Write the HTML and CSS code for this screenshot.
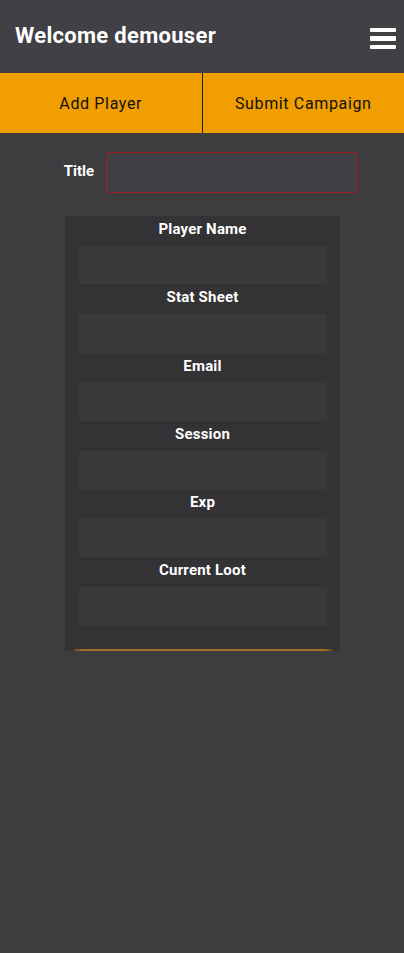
FILE: index.html
```html
<!DOCTYPE html>
<html>
<head>
<meta charset="utf-8">
<link rel="stylesheet" href="styles.css">
</head>
<body>
<header class="topbar">
  <h1 class="welcome">Welcome demouser</h1>
  <button class="burger" aria-label="menu"><span></span><span></span><span></span></button>
</header>
<nav class="actions">
  <button class="action">Add Player</button>
  <button class="action">Submit Campaign</button>
</nav>
<main class="content">
  <div class="title-row">
    <label class="title-label">Title</label>
    <input class="title-input" type="text">
  </div>
  <section class="card">
    <label class="field-label">Player Name</label>
    <input class="field-input" type="text">
    <label class="field-label">Stat Sheet</label>
    <input class="field-input" type="text">
    <label class="field-label">Email</label>
    <input class="field-input" type="text">
    <label class="field-label">Session</label>
    <input class="field-input" type="text">
    <label class="field-label">Exp</label>
    <input class="field-input" type="text">
    <label class="field-label">Current Loot</label>
    <input class="field-input" type="text">
    <div class="card-edge"></div>
  </section>
</main>
</body>
</html>
```
FILE: styles.css
```css
html, body {
  margin: 0;
  padding: 0;
  background: #3d3c3f;
  font-family: Roboto, "Noto Sans", sans-serif;
  color: #fff;
  min-height: 953px;
}
.topbar {
  height: 73px;
  background: #414045;
  display: flex;
  align-items: center;
  justify-content: space-between;
  padding: 0 8px 0 15px;
  box-sizing: border-box;
}
.welcome {
  margin: 0;
  font-size: 22px;
  font-weight: 700;
  letter-spacing: 0.3px;
  position: relative;
  top: -1px;
}
.burger {
  background: none;
  border: 0;
  padding: 0;
  width: 26px;
  display: flex;
  flex-direction: column;
  gap: 4.3px;
  margin-top: 4px;
}
.burger span {
  display: block;
  height: 4.3px;
  background: #fff;
  border-radius: 1px;
}
.actions {
  display: flex;
  height: 60px;
  background: #f09e00;
}
.action {
  flex: 1;
  background: #f09e00;
  border: 0;
  font-family: Roboto, "Noto Sans", sans-serif;
  font-size: 16px;
  letter-spacing: 0.65px;
  color: #111;
  padding: 0;
}
.action + .action {
  border-left: 1px solid #1a1a1a;
}
.content {
  display: flex;
  flex-direction: column;
  align-items: center;
  padding-top: 19px;
}
.title-row {
  display: flex;
  align-items: center;
  gap: 12px;
  margin-left: 17px;
}
.title-label {
  font-size: 15px;
  font-weight: 700;
  position: relative;
  top: -2px;
}
.title-input {
  width: 251px;
  height: 41px;
  box-sizing: border-box;
  background: #413f43;
  border: 1px solid #a01e1e;
  border-radius: 2px;
  outline: none;
}
.card {
  margin-top: 23px;
  width: 275px;
  background: #333234;
  display: flex;
  flex-direction: column;
  align-items: center;
  padding: 3px 0 0;
  box-sizing: border-box;
  margin-left: 1px;
}
.field-label {
  font-size: 15px;
  font-weight: 700;
  height: 27px;
  line-height: 20px;
  letter-spacing: 0.2px;
}
.field-input {
  width: 248px;
  height: 38.25px;
  box-sizing: border-box;
  background: #3a393b;
  border: 0;
  outline: none;
  margin-bottom: 3px;
}
.card-edge {
  margin-top: 20px;
  width: 258px;
  height: 2px;
  background: linear-gradient(90deg, rgba(160,112,30,0.4), #a0711e 3%, #a0711e 97%, rgba(160,112,30,0.4));
}
```
